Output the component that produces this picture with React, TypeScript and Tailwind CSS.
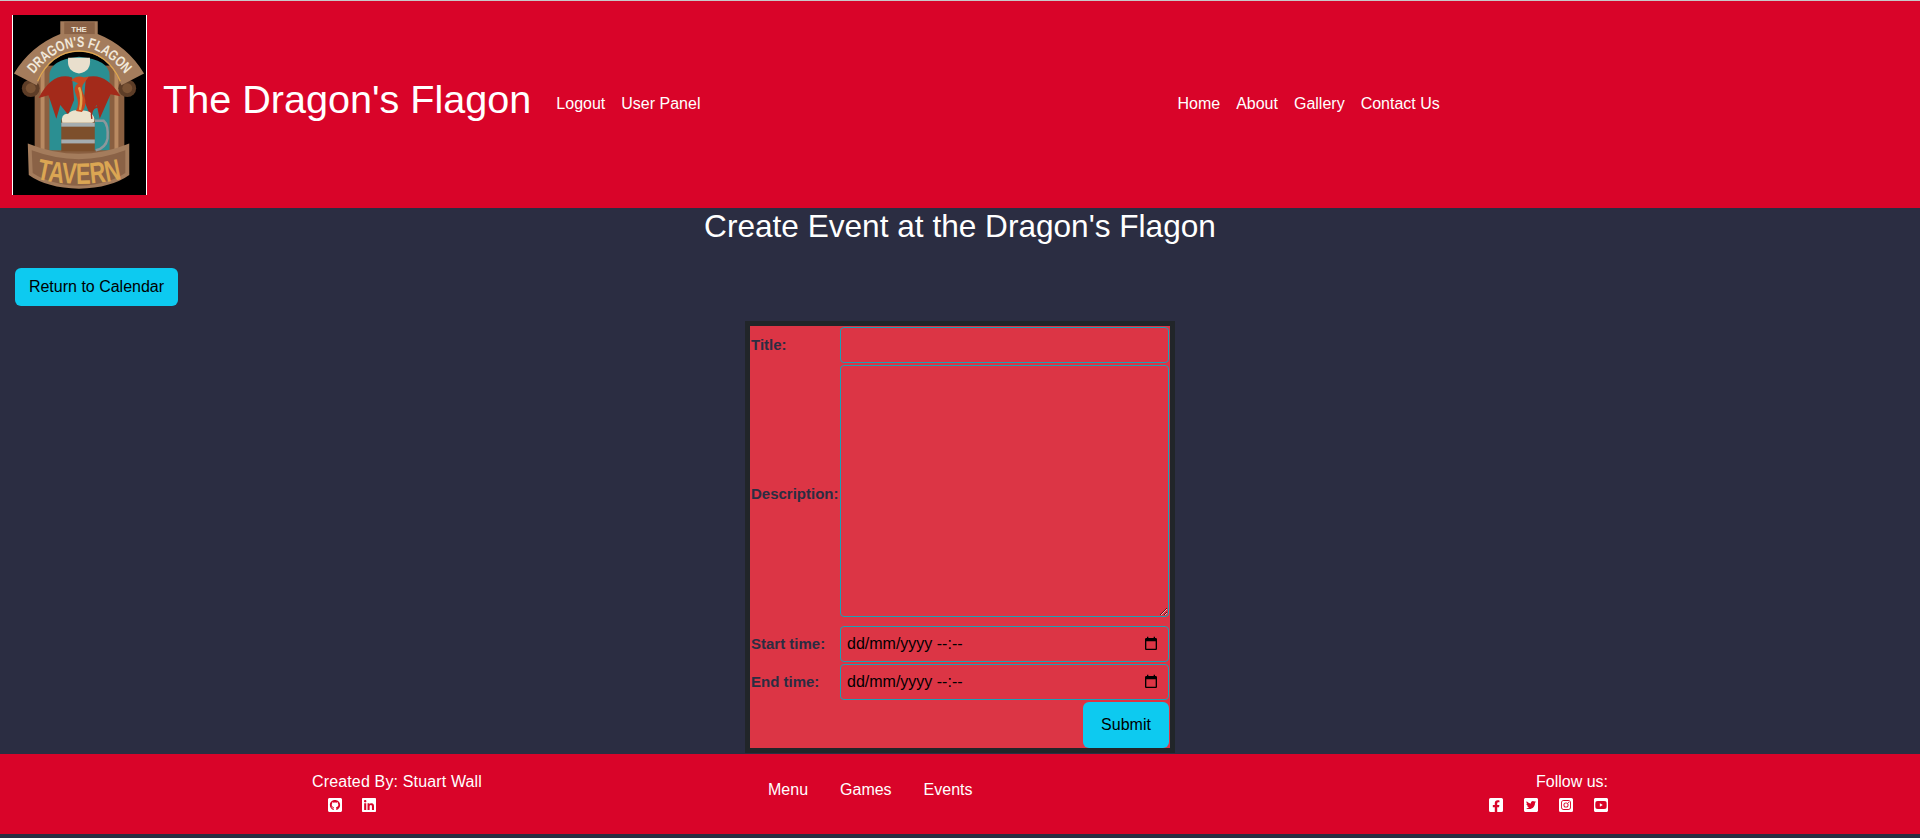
import React from "react";
import {
  FaFacebookSquare,
  FaGithubSquare,
  FaInstagramSquare,
  FaLinkedin,
  FaTwitterSquare,
  FaYoutubeSquare,
} from "react-icons/fa";

const fieldClass =
  "block w-full rounded-[4px] border border-[#1ba1b5] bg-transparent outline-none";

const Logo = () => (
  <svg viewBox="0 0 135 180" className="block h-[180px] w-[135px] shrink-0 bg-black border-x border-white">
    <defs>
      <path id="archText" d="M20 60 Q67 2 115 60" />
      <path id="tavernText" d="M20 164 Q67 176 114 164" />
    </defs>
    {/* body and columns */}
    <rect x="22" y="50" width="91" height="90" fill="#8a5f40" />
    <rect x="28" y="50" width="4" height="90" fill="#b98a62" />
    <rect x="103" y="50" width="4" height="90" fill="#b98a62" />
    <circle cx="18" cy="73" r="9" fill="#5d3d27" />
    <circle cx="18" cy="73" r="5" fill="#7a5335" />
    <circle cx="116" cy="73" r="9" fill="#5d3d27" />
    <circle cx="116" cy="73" r="5" fill="#7a5335" />
    {/* teal window */}
    <path d="M37 136V60Q37 44 67 41Q98 44 98 60V136Z" fill="#2b8f92" />
    <path d="M56 42H78Q80 56 67 58Q54 56 56 42Z" fill="#e9dfcd" />
    {/* arch band */}
    <path d="M1 58Q18 30 48 18L48 5L86 5L86 18Q116 30 133 58L110 70Q96 36 67 36Q38 36 24 70Z" fill="#a47c5c" />
    <path d="M52 6H83V18H52Z" fill="#8a6246" />
    <path d="M25 66Q38 36 67 35Q96 36 109 66" fill="none" stroke="#e0a74e" strokeWidth="1.3" />
    <text x="67" y="15.500" textAnchor="middle" fontSize="8" fontFamily="Liberation Sans, sans-serif" fontWeight="700" fill="#efe6d6">THE</text>
    <text fontSize="15" fontFamily="Liberation Sans, sans-serif" fontWeight="700" fill="#f1e8da">
      <textPath href="#archText" startOffset="50%" textAnchor="middle" textLength="112" lengthAdjust="spacingAndGlyphs">DRAGON'S FLAGON</textPath>
    </text>
    {/* wings */}
    <path d="M60 62Q40 56 26 83L36 80L44 104L48 90L56 100L62 85Z" fill="#a32a1a" />
    <path d="M74 62Q94 56 109 81L99 79L88 104L85 90L78 100L72 85Z" fill="#a32a1a" />
    {/* mug */}
    <path d="M83 106H92Q97 110 96 124Q94 134 84 136" fill="none" stroke="#8d979b" strokeWidth="2.500" />
    <rect x="49" y="104" width="34" height="33" fill="#7d4f2c" />
    <rect x="49" y="108" width="34" height="4" fill="#a5adb0" />
    <rect x="49" y="125" width="34" height="4" fill="#a5adb0" />
    <path d="M50 108Q48 99 56 99Q60 94 68 96Q78 94 82 102Q84 108 80 108Z" fill="#ece2cc" />
    {/* dragon body */}
    <path d="M59 65Q65 59 72 62L77 61L72 68Q68 72 72 80Q76 90 70 97L64 96Q68 88 64 80Q60 72 66 68Z" fill="#c9471f" />
    <path d="M67 72Q71 82 68 95" fill="none" stroke="#e0a74e" strokeWidth="2.500" />
    <path d="M80 104Q78 94 85 92Q90 92 88 98" fill="none" stroke="#a32a1a" strokeWidth="1.500" />
    {/* tavern banner */}
    <path d="M15 129Q67 150 118 129L118 161Q100 174 67 175Q34 174 16 161Z" fill="#a47c5c" />
    <path d="M19 136Q67 154 114 136L114 159Q96 171 67 172Q38 171 20 159Z" fill="#8a6246" />
    <text fontSize="30" fontFamily="Liberation Sans, sans-serif" fontWeight="700" fill="#dba653">
      <textPath href="#tavernText" startOffset="50%" textAnchor="middle" textLength="88" lengthAdjust="spacingAndGlyphs">TAVERN</textPath>
    </text>
  </svg>
);

const DateField = () => (
  <div className={`${fieldClass} flex h-[36px] items-center justify-between pl-[6px] pr-[9px] text-[16px] font-normal text-black`}>
    <span>dd/mm/yyyy --:--</span>
    <svg viewBox="0 0 24 24" className="h-[16px] w-[16px]" fill="#000">
      <path d="M19 3h-1V1h-2v2H8V1H6v2H5C3.9 3 3 3.900 3 5v14c0 1.100.9 2 2 2h14c1.100 0 2-.9 2-2V5c0-1.100-.9-2-2-2zm0 16H5V8h14v11z" />
    </svg>
  </div>
);

export default function App() {
  return (
    <div className="flex h-[838px] flex-col overflow-hidden bg-[#2b2d42] font-['Liberation_Sans',sans-serif] text-white">
      <header className="flex h-[208px] shrink-0 items-center border-t border-[#c8c8c8] bg-[#d90429] pl-3">
        <Logo />
        <h1 className="mb-[10px] ml-4 text-[39.6px] leading-none">The Dragon's Flagon</h1>
        <nav className="mb-[2px] ml-[25px] flex gap-4 text-[16px]">
          <a>Logout</a>
          <a>User Panel</a>
        </nav>
        <nav className="mb-[2px] ml-[477px] flex gap-4 text-[16px]">
          <a>Home</a>
          <a>About</a>
          <a>Gallery</a>
          <a>Contact Us</a>
        </nav>
      </header>

      <main className="flex-1">
        <h2 className="mt-[-1px] text-center text-[31.6px] leading-[38px]">Create Event at the Dragon's Flagon</h2>
        <button className="ml-[15px] mt-[23px] block h-[38px] w-[163px] rounded-[6px] bg-[#0dcaf0] text-[16px] text-black">
          Return to Calendar
        </button>
        <form className="mx-auto mt-[15px] h-[432px] w-[430px] border-[5px] border-[#212529] bg-[#dc3545] text-[#2b2d42]">
          <div className="grid grid-cols-[90px_329px] gap-y-[2px] text-[15px] font-bold">
            <label className="flex items-center pl-[1px] pt-[2px]">Title:</label>
            <input className={`${fieldClass} mt-[1px] h-[36px]`} />
            <label className="flex items-center pl-[1px] pt-[6px]">Description:</label>
            <textarea className={`${fieldClass} h-[252px]`} />
            <label className="mt-[7px] flex items-center pl-[1px]">Start time:</label>
            <div className="mt-[7px]"><DateField /></div>
            <label className="flex items-center pl-[1px]">End time:</label>
            <DateField />
          </div>
          <div className="mt-[2px] flex justify-end pr-[1px]">
            <button className="h-[46px] w-[86px] rounded-[6px] bg-[#0dcaf0] text-[16px] text-black">Submit</button>
          </div>
        </form>
      </main>

      <footer className="mb-[4px] h-[80px] shrink-0 bg-[#d90429]">
        <div className="mx-auto flex w-[1296px] pt-[18px] text-[16px]">
          <div className="w-[170px]">
            <p className="whitespace-nowrap leading-[20px] tracking-[0.15px]">Created By: Stuart Wall</p>
            <div className="ml-[15px] mt-[5px] flex gap-[18px]">
              <FaGithubSquare />
              <FaLinkedin />
            </div>
          </div>
          <nav className="ml-[286px] mt-[6px] flex gap-8">
            <a>Menu</a>
            <a>Games</a>
            <a>Events</a>
          </nav>
          <div className="ml-auto">
            <p className="text-right leading-[20px]">Follow us:</p>
            <div className="mr-[-1px] mt-[5px] flex gap-[19px]">
              <FaFacebookSquare />
              <FaTwitterSquare />
              <FaInstagramSquare />
              <FaYoutubeSquare />
            </div>
          </div>
        </div>
      </footer>
    </div>
  );
}
